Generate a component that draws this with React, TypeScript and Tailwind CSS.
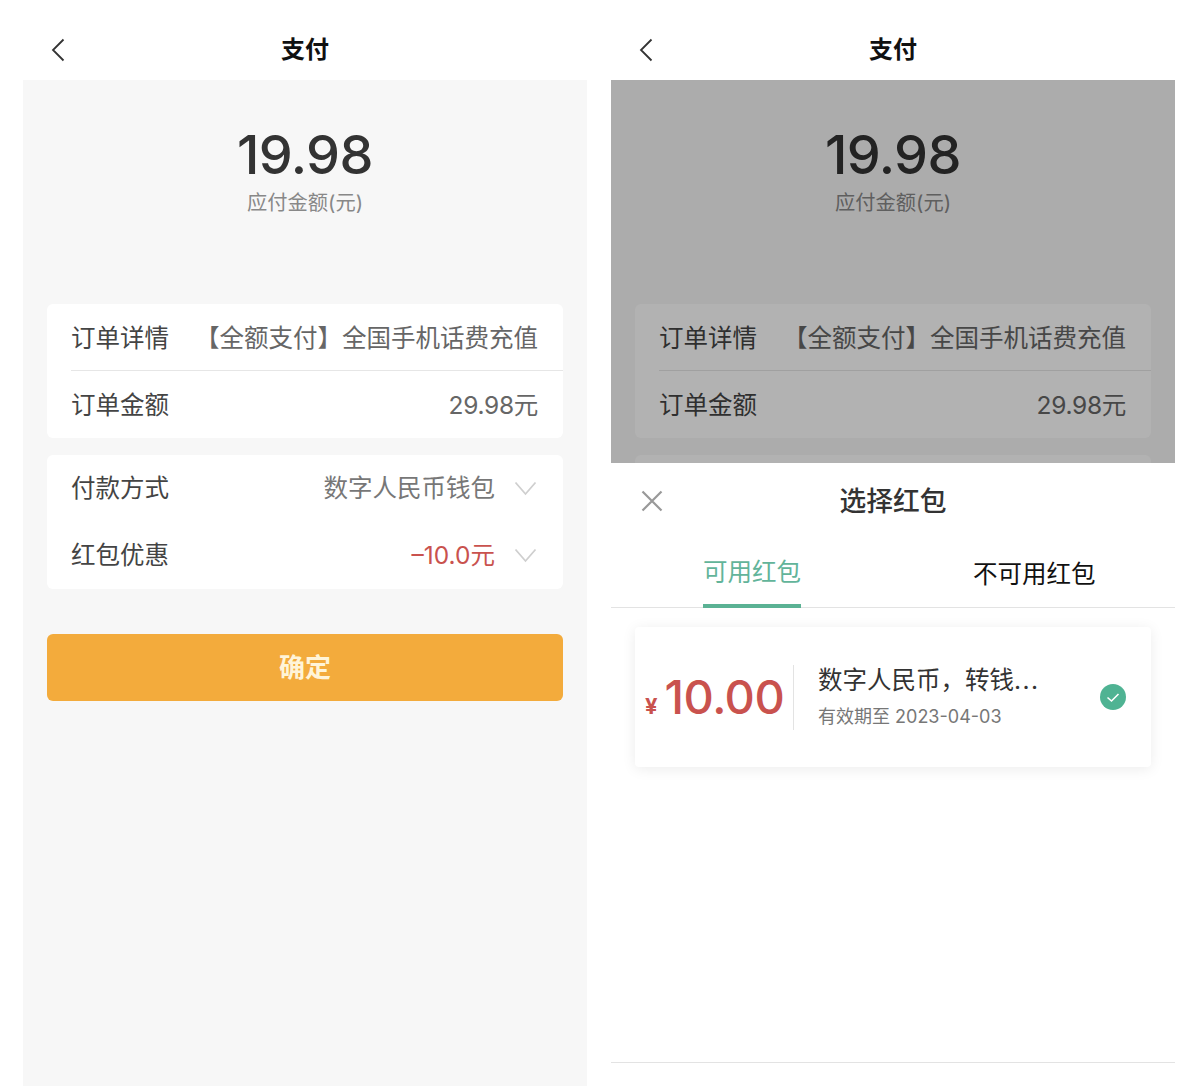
import React from "react";

const cjk = "font-['Inter','Noto_Sans_CJK_SC',sans-serif]";

const Chevron = () => (
  <svg width="24" height="16" viewBox="0 0 24 16" fill="none" className="ml-[19px] shrink-0">
    <path d="M1.5 1.5 L11.5 13 L21.5 1.5" stroke="#cfcfcf" strokeWidth="1.8" />
  </svg>
);

const Row = ({
  label,
  value,
  valueClass = "text-[#666666]",
  arrow = false,
  height = "h-[67px]",
}: {
  label: string;
  value: string;
  valueClass?: string;
  arrow?: boolean;
  height?: string;
}) => (
  <div className={`flex items-center justify-between pr-[25px] ${height}`}>
    <span className="text-[24.5px] text-[#444444]">{label}</span>
    <span className="flex items-center">
      <span className={`text-[24.5px] ${valueClass}`}>{value}</span>
      {arrow && <Chevron />}
    </span>
  </div>
);

// covered: the sheet hides everything under the second card on the right screen
const PayPage = ({ covered = false }: { covered?: boolean }) => (
  <>
    <div className="relative flex h-20 items-center justify-center bg-white">
      <svg width="14" height="24" viewBox="0 0 14 24" fill="none" className="absolute left-[28px] top-[38px]">
        <path d="M12.5 1.5 L2 12 L12.5 22.5" stroke="#333333" strokeWidth="1.8" />
      </svg>
      <span className="mt-[20px] text-[24px] font-bold text-[#111111]">支付</span>
    </div>
    <div className="flex h-[1006px] flex-col bg-[#f7f7f7] px-6">
      <div className="mt-[40px] text-center text-[54px] leading-[70px] font-medium tracking-[-0.6px] text-[#333333]">19.98</div>
      <div className="mt-[-2px] text-center text-[20.3px] leading-[30px] text-[#888888]">应付金额(元)</div>
      <div className="mt-[86px] rounded-md bg-white pl-6">
        <div className="border-b border-[#e6e6e6] pt-[2px]">
          <Row label="订单详情" value="【全额支付】全国手机话费充值" height="h-[64px]" />
        </div>
        <div className="pt-[2px]">
          <Row label="订单金额" value="29.98元" valueClass="text-[#666666] tracking-[-0.3px]" height="h-[65px]" />
        </div>
      </div>
      <div className="mt-[17px] h-[134px] rounded-md bg-white pl-6">
        {!covered && (
          <>
            <Row label="付款方式" value="数字人民币钱包" valueClass="text-[#777777]" arrow />
            <Row label="红包优惠" value="–10.0元" valueClass="text-[#c9524e]" arrow />
          </>
        )}
      </div>
      {!covered && (
        <button className="mt-[45px] flex h-[67px] items-center justify-center rounded-md bg-[#f3ab3c] text-[26px] font-bold text-[#fff4d8]">
          确定
        </button>
      )}
    </div>
  </>
);

const App = () => {
  return (
    <div className={`flex h-[1086px] gap-6 overflow-hidden bg-white pl-[23px] ${cjk}`}>
      <div className="w-[564px] shrink-0">
        <PayPage />
      </div>
      <div className="relative w-[564px] shrink-0 overflow-hidden">
        <PayPage covered />
        <div className="absolute inset-x-0 bottom-0 top-20 bg-black/30" />
        <div className="absolute inset-x-0 bottom-0 top-[463px] bg-white">
          <div className="relative flex h-[76px] items-center justify-center">
            <svg width="22" height="22" viewBox="0 0 22 22" fill="none" className="absolute left-[30px] top-[27px]">
              <path d="M1.5 1.5 L20.5 20.5 M20.5 1.5 L1.5 20.5" stroke="#999999" strokeWidth="2.2" />
            </svg>
            <span className="text-[26.75px] font-medium text-[#333333]">选择红包</span>
          </div>
          <div className="flex h-[69px] border-b border-[#e3e3e3]">
            <div className="ml-[92px] flex h-[69px] w-[98px] flex-col items-center border-b-4 border-[#5bb294]">
              <span className="mt-[15px] text-[24.5px] whitespace-nowrap text-[#62b49a]">可用红包</span>
            </div>
            <div className="ml-[172px]">
              <span className="mt-[17px] block text-[24.5px] whitespace-nowrap text-[#111111]">不可用红包</span>
            </div>
          </div>
          <div className="mx-6 mt-[19px] flex h-[140px] items-center rounded-sm bg-white shadow-[0_2px_14px_rgba(0,0,0,0.08)]">
            <div className="ml-[10px] flex w-[148px] items-baseline pt-[2px]">
              <span className="text-[22px] font-bold text-[#c9524e]">¥</span>
              <span className="ml-[7px] text-[47px] leading-none font-medium tracking-[-0.5px] text-[#c9524e]">10.00</span>
            </div>
            <div className="h-[65px] w-px bg-[#e3e3e3]" />
            <div className="ml-[24px] flex-1">
              <div className="mt-[-2px] text-[24.5px] leading-[34px] text-[#333333]">
                数字人民币，转钱<span className="tracking-[1.5px]">...</span>
              </div>
              <div className="mt-[8px] text-[18px] leading-[24px] text-[#777777]">有效期至 2023-04-03</div>
            </div>
            <svg width="26" height="26" viewBox="0 0 26 26" className="mr-[25px] shrink-0">
              <circle cx="13" cy="13" r="13" fill="#4fb393" />
              <path d="M7.5 13.5 L11.5 17 L18.5 10" stroke="#ffffff" strokeWidth="1.6" fill="none" />
            </svg>
          </div>
          <div className="absolute inset-x-0 top-[599px] h-px bg-[#e3e3e3]" />
        </div>
      </div>
    </div>
  );
};

export default App;
